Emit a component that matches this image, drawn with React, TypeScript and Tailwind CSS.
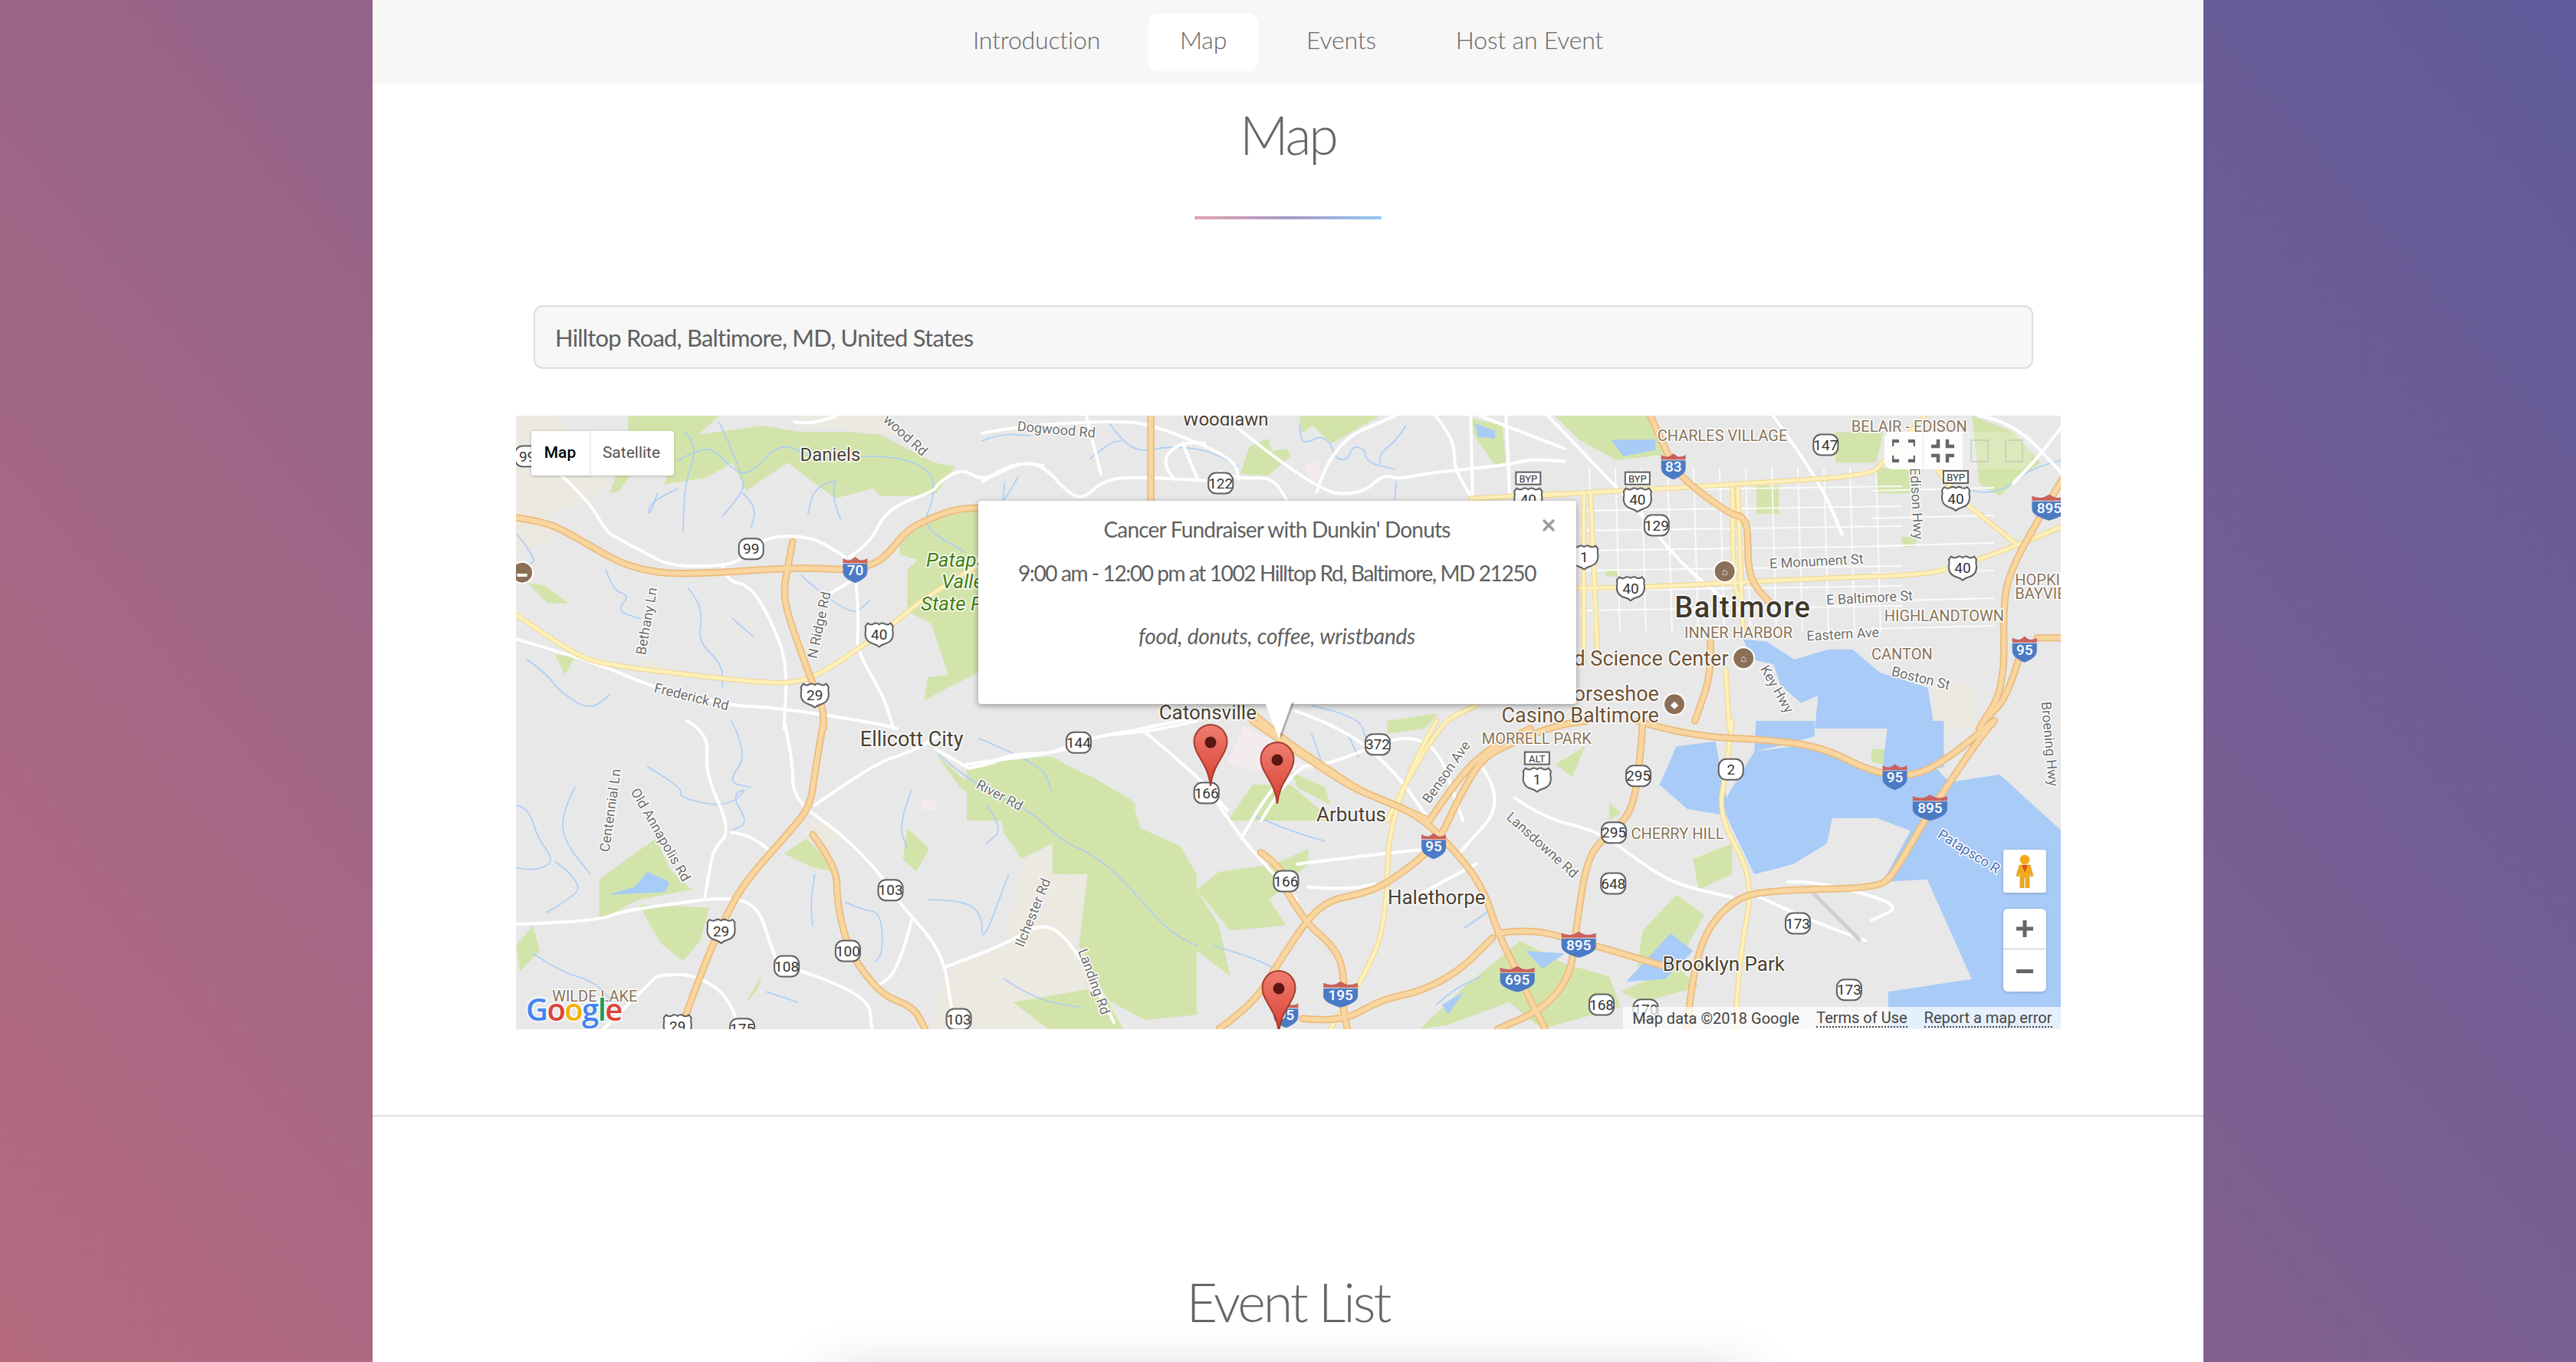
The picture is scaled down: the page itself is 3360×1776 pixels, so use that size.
import { X } from "lucide-react";

// crop origin + horizontal scale of each zoomed map region, used to place map data
const crops: Record<string, [number, number, number]> = {
  a: [660, 2.24, 530],
  b: [1260, 1.823, 630],
  c: [2000, 2.24, 530],
  d: [660, 1.742, 940],
  e: [1560, 1.375, 940],
  f: [1280, 2.063, 535],
};

const pt = (z: string, x: number, y: number): [number, number] => {
  const [ox, s, oy] = crops[z];
  return [ox + x / s, oy + y / 3];
};

const points = (z: string, s: string) =>
  s
    .trim()
    .split(/\s+/)
    .map((p) => {
      const [x, y] = p.split(",").map(Number);
      return pt(z, x, y);
    });

const polygon = (z: string, s: string) =>
  points(z, s)
    .map(([x, y], i) => `${i ? "L" : "M"}${x.toFixed(1)} ${y.toFixed(1)}`)
    .join("") + "Z";

// rounds the bends of a road through the midpoints of its segments
const curve = (z: string, s: string) => {
  const p = points(z, s);
  let d = `M${p[0][0].toFixed(1)} ${p[0][1].toFixed(1)}`;
  for (let i = 1; i < p.length - 1; i++) {
    const mx = (p[i][0] + p[i + 1][0]) / 2;
    const my = (p[i][1] + p[i + 1][1]) / 2;
    d += `Q${p[i][0].toFixed(1)} ${p[i][1].toFixed(1)} ${mx.toFixed(1)} ${my.toFixed(1)}`;
  }
  const last = p[p.length - 1];
  return d + `L${last[0].toFixed(1)} ${last[1].toFixed(1)}`;
};

type Geo = [string, string];

const beige: Geo[] = [
  ["a", "27,36 150,36 300,260 270,350 120,420 140,520 27,560"],
  ["a", "470,36 500,36 520,90 480,90"],
  ["a", "840,36 1100,36 1160,120 1000,90 860,80"],
  ["d", "960,1205 1000,970 1130,880 1170,560 1240,480 1240,610 1320,600 1290,880 1400,1180 1420,1205"],
  ["c", "1170,1080 1280,1080 1290,1260 1170,1260"],
  ["d", "690,380 760,430 720,560 680,420"],
  ["a", "400,1000 440,980 450,1030 400,1030"],
];

const green: Geo[] = [
  ["a", "355,36 620,36 560,110 750,75 860,100 1000,100 1090,110 1250,220 1310,235 1255,340 1200,350 1090,350 1070,320 960,360 820,220 700,330 660,220 580,280 460,305 480,220 350,200"],
  ["a", "320,270 360,270 330,330 300,340"],
  ["a", "1380,395 1270,430 1180,470 1145,530 1150,580 1200,600 1170,640 1170,800 1240,850 1290,1050 1230,1060 1220,1150 1290,1100 1380,1040"],
  ["a", "60,690 110,700 180,770 120,770 90,730"],
  ["a", "140,970 200,980 170,1050"],
  ["d", "975,130 1040,230 1130,150 1240,140 1270,170 1340,230 1420,310 1440,420 1530,490 1568,600 1568,1150 1450,1170 1320,1050 1150,1100 1230,1205 1400,1205 1300,880 1320,600 1240,600 1240,480 1170,540 1130,440 1120,360 1030,260"],
  ["d", "910,420 960,500 930,590 900,540"],
  ["d", "210,620 290,520 340,460 370,580 420,660 300,700 210,780"],
  ["d", "630,520 680,460 740,560 740,590 690,570"],
  ["d", "300,720 460,730 440,860 400,940 350,870"],
  ["d", "21,880 60,800 75,900 30,980"],
  ["d", "540,1110 580,990 570,1050"],
  ["b", "60,1100 200,1100 300,1150 400,1250 400,1320 0,1320 0,1120"],
  ["b", "620,1320 680,1180 770,1180 870,1320"],
  ["b", "1000,930 1120,900 1090,960 1000,980"],
  ["b", "1400,1100 1470,1030 1440,1150"],
  ["f", "695,250 720,140 770,110 780,160 820,150 830,180 770,255"],
  ["f", "855,22 1070,22 1000,80 940,130 890,60 860,90"],
  ["f", "1315,30 1400,60 1410,215 1380,215 1320,90"],
  ["c", "60,36 330,36 380,190 240,210 130,130"],
  ["c", "650,310 715,310 715,420 650,420"],
  ["c", "1000,240 1100,240 1100,340 1000,340"],
  ["c", "880,100 1020,100 1000,220 880,220"],
  ["c", "1280,36 1400,100 1480,220 1400,300 1360,350 1300,300"],
  ["c", "1070,510 1120,510 1110,550 1080,550"],
  ["c", "210,640 245,640 245,665 210,665"],
  ["e", "40,590 140,560 200,500 200,560 130,700 160,800 60,820 0,660"],
  ["e", "0,660 40,800 60,1000 0,900"],
  ["e", "800,820 860,680 910,760 860,960 790,960"],
  ["e", "480,1040 580,860 660,950 740,1000 760,1120 620,1205 560,1100 450,1190 400,1205"],
  ["e", "890,540 960,480 960,600 900,660"],
  ["e", "1210,110 1260,110 1250,180 1210,160"],
  ["e", "740,320 760,360 740,390"],
  ["e", "760,1060 860,960 900,1040 800,1100"],
  ["e", "170,200 230,260 240,330 180,260"],
];

const pinkish: Geo[] = [
  ["b", "660,950 740,1020 830,1130 780,1110 680,1130 620,1090"],
  ["f", "870,210 905,195 910,265 880,285"],
  ["d", "940,310 975,310 975,350 945,350"],
];

const water: Geo[] = [
  ["c", "610,910 680,920 760,990 860,950 930,950 1010,1040 1150,1100 1170,1260 820,1260 830,1130 780,1160 720,1090 700,1010 640,990"],
  ["e", "860,100 930,80 950,300 1000,120 1100,90 1190,190 1260,220 1320,170 1350,240 1440,210 1551,430 1551,1205 1240,1205 1240,1060 1390,1010 1310,620 1230,630 1280,430 1220,380 1140,380 1130,480 1070,560 1000,600 960,420 950,370 880,345 830,250"],
  ["e", "1003,0 1108,0 1108,60 1060,90 1000,120"],
  ["e", "1240,0 1340,0 1340,180 1260,220 1230,180"],
  ["c", "225,130 355,130 355,170 260,195"],
  ["f", "1325,50 1380,80 1380,110 1335,105"],
  ["d", "290,650 320,590 370,630 360,670 230,680"],
  ["e", "590,900 660,910 620,970"],
  ["e", "770,1020 850,830 890,900 840,1010"],
  ["e", "440,1110 480,1060 450,1150"],
];

const highways: Geo[] = [
  ["a", "27,435 100,450 160,480 250,550 330,610 400,640 480,655 620,650 780,635 900,632 985,640 1060,625 1110,585 1170,480 1260,425 1320,400 1400,395"],
  ["a", "835,530 822,620 808,730 825,830 860,960 895,1090 925,1180 925,1260"],
  ["d", "720,0 700,200 690,330 650,420 540,630 490,790 450,950 395,1205"],
  ["d", "695,445 750,570 750,700 770,860 800,960 855,1075 925,1120 950,1205"],
  ["f", "454,22 454,354"],
  ["b", "680,900 740,990 860,1120 930,1200 1020,1260 1100,1320"],
  ["e", "100,0 180,120 270,250 320,300 380,350 430,430 510,630 540,830 570,960 600,1100 625,1205"],
  ["e", "40,1205 100,1110 140,970 200,770 240,700 290,680 340,640 430,490 470,300 510,150 560,90 640,20 700,0"],
  ["e", "790,0 880,60 1040,75 1130,110 1210,200 1280,220 1340,160 1430,0"],
  ["e", "800,0 795,170 780,360 740,440 700,530 680,820 670,1000 620,1130 540,1205"],
  ["e", "540,830 590,815 660,845 840,960"],
  ["e", "880,1205 890,900 960,690 1050,660 1220,655 1250,600 1310,370 1400,80 1430,0"],
  ["e", "160,660 190,780 250,890 265,1000 260,1100 270,1205"],
  ["e", "190,1165 260,1180 330,1090 400,1060 470,980 530,850"],
  ["e", "115,515 150,570 160,640"],
  ["c", "340,36 390,190 430,280 570,420 610,430 625,480 625,670 690,770"],
  ["c", "515,920 520,1040 470,1230"],
  ["c", "1541,290 1470,450 1400,620 1370,750 1375,1100 1300,1260"],
  ["c", "1470,905 1541,905"],
  ["c", "1420,970 1385,1130 1330,1210"],
  ["b", "1100,1320 1170,1150 1240,1040 1340,960"],
];

const arterials: Geo[] = [
  ["a", "27,815 120,900 220,985 320,1015 500,1045 700,1075 850,1085 950,1020 1050,925 1130,850 1210,760 1400,600"],
  ["c", "20,350 160,335 400,320 640,300 980,270 1020,220 1140,40"],
  ["c", "145,340 145,1000"],
  ["c", "165,340 185,960"],
  ["c", "120,710 240,710 430,700 640,685 880,670 1100,660 1210,640 1400,550 1541,470"],
  ["c", "580,320 580,690 600,750"],
  ["c", "595,320 610,880"],
  ["c", "560,1030 570,1260"],
  ["c", "1180,250 1240,360 1300,420 1410,540"],
  ["e", "430,0 345,320 340,800 300,1000 240,1205"],
  ["e", "960,0 950,190 935,370 1000,620 975,900 965,1205"],
  ["b", "1000,1320 1110,950 1210,870"],
  ["f", "1315,345 1568,325"],
];

const roads: Geo[] = [
  ["a", "27,910 180,970 310,1030 430,1100 650,1170 750,1175 900,1200 1080,1240 1140,1260"],
  ["a", "160,270 240,370 290,490 330,520 400,570 480,625 620,625 690,600 750,510 890,505 990,590"],
  ["a", "1000,590 1060,540 1110,400 1250,330 1260,300 1330,240 1390,295 1480,220 1568,230"],
  ["a", "630,620 640,680 710,700 770,830 820,1000 810,1260"],
  ["a", "1020,680 1030,850 1020,950 1100,1130 1130,1260"],
  ["a", "940,735 1010,680"],
  ["a", "840,60 880,70 960,40"],
  ["d", "21,795 200,785 260,745 400,710 500,690 570,720 600,880 620,970"],
  ["d", "630,0 650,150 650,310 760,440 850,600 890,710 990,900 1010,1120 1020,1205"],
  ["d", "700,330 830,170 920,120 980,60"],
  ["d", "1050,185 1100,170 1140,130 1260,125 1340,55 1450,45 1568,0"],
  ["d", "975,110 1050,185"],
  ["d", "670,980 820,1065 830,1205"],
  ["d", "1000,960 1130,880 1220,780 1290,880 1380,1180"],
  ["d", "920,780 890,980 840,1040"],
  ["d", "340,1000 400,980 480,1040 520,1140 520,1205"],
  ["d", "220,1205 340,1000"],
  ["d", "410,0 460,50 450,200 510,430 470,500 460,590 450,690"],
  ["d", "510,435 550,445 600,510"],
  ["b", "0,1100 80,1080 200,1060 280,1000 420,960 500,930 640,890"],
  ["b", "420,970 540,1130 620,1280"],
  ["b", "700,1320 780,1100 850,1110 1100,940 1180,1320"],
  ["b", "780,890 900,960 1020,1130 1100,1320"],
  ["e", "30,300 80,460 130,580 180,700"],
  ["e", "80,460 120,300 175,180"],
  ["e", "570,300 620,380 720,430 800,560 860,640 960,690"],
  ["e", "180,560 330,520 420,500"],
  ["e", "1000,680 1100,780 1200,860"],
  ["e", "1060,630 1110,625 1270,720 1210,780"],
  ["e", "500,150 560,300 470,520"],
  ["e", "200,650 260,660 320,640"],
  ["e", "390,690 500,560"],
  ["f", "0,280 90,205 160,210 230,320 270,350 330,270 430,260 600,275"],
  ["f", "320,250 280,22"],
  ["f", "640,240 690,270 780,260 820,350"],
  ["f", "0,90 100,60 370,40 470,60 680,190 690,270"],
  ["f", "680,60 900,320 1020,330 1080,250 1120,270 1200,245 1410,215 1480,190 1568,200"],
  ["f", "900,320 940,130 1110,22"],
  ["f", "1220,22 1270,110 1270,220 1300,300 1320,350"],
  ["f", "1315,22 1320,350"],
  ["f", "1410,22 1420,340"],
  ["f", "1340,22 1568,150"],
  ["f", "540,130 580,270"],
  ["f", "600,130 540,120 490,180 500,240 520,270"],
  ["c", "40,36 200,260 300,400 430,620 600,800"],
  ["c", "700,40 830,280 900,500"],
  ["c", "1400,300 1460,220 1541,80"],
  ["c", "1300,36 1400,60 1541,260"],
];

const rivers: Geo[] = [
  ["a", "500,210 580,155 620,190 700,290 800,130 900,215 1100,185 1240,240 1250,360 1210,470 1340,570"],
  ["a", "520,100 560,150 520,300 515,490"],
  ["a", "620,60 700,290 680,350 630,430"],
  ["a", "690,340 730,390 715,470"],
  ["a", "960,290 900,310 880,420"],
  ["a", "960,290 950,350 975,440"],
  ["a", "440,340 415,440 415,380 500,320"],
  ["a", "30,500 90,600 60,620"],
  ["a", "290,640 310,720 360,740 320,800 390,830"],
  ["a", "530,710 560,760 570,830 560,920 630,1010 630,1100"],
  ["a", "660,830 720,900"],
  ["a", "860,660 1000,830 1060,760"],
  ["a", "60,990 120,1050 150,1110 240,1190 300,1130"],
  ["d", "320,180 400,260 390,300 500,340 550,260 510,290 550,400 510,430"],
  ["d", "21,330 50,340 70,460 110,550 65,585 21,575"],
  ["d", "110,550 180,640 130,710 90,750"],
  ["d", "155,260 125,360 130,470 190,600"],
  ["d", "510,0 550,130 500,240 555,260"],
  ["d", "700,600 690,700 695,800"],
  ["d", "770,710 810,740 850,750 855,900 840,940"],
  ["d", "960,700 1030,700 1080,750 1080,880 1140,600"],
  ["d", "920,270 890,400 910,500"],
  ["d", "1090,330 1130,420 1090,480"],
  ["d", "60,910 120,980 200,1020 240,1100"],
  ["d", "980,130 1060,250 1190,350 1260,470 1330,520 1400,620 1500,820 1568,880"],
  ["d", "1130,1010 1200,1090 1300,1120"],
  ["d", "590,1060 660,1100"],
  ["f", "0,120 50,90 130,100"],
  ["f", "340,45 375,120 430,165 500,140 610,155 690,220"],
  ["f", "290,190 345,125 375,120"],
  ["f", "60,350 98,260"],
  ["f", "855,50 855,120 880,125 910,100 940,130 950,190 985,195 995,140 1030,150 1035,205 1110,230"],
  ["f", "1140,60 1120,110 1070,170 1070,210"],
  ["f", "1115,280 1110,350"],
  ["b", "90,0 80,150"],
  ["b", "820,870 930,910 950,1000"],
  ["b", "820,980 850,1120"],
  ["b", "30,1000 180,1100 200,1200"],
  ["e", "30,880 110,930 160,1000"],
  ["e", "100,370 180,440 230,470"],
  ["e", "270,50 290,140"],
  ["e", "430,1110 460,1050 510,1000"],
  ["e", "480,810 520,750"],
  ["c", "1280,330 1350,350 1440,250 1541,210"],
];

const stateRoutes: [string, number, number, string][] = [
  ["a", 714, 557, "99"],
  ["a", 60, 195, "99"],
  ["f", 642, 285, "122"],
  ["b", 266, 1015, "144"],
  ["b", 570, 1212, "166"],
  ["b", 977, 1022, "372"],
  ["c", 852, 150, "147"],
  ["c", 358, 465, "129"],
  ["d", 872, 662, "103"],
  ["d", 775, 900, "100"],
  ["d", 636, 960, "108"],
  ["d", 1027, 1167, "103"],
  ["d", 535, 1205, "175"],
  ["e", 160, 627, "166"],
  ["e", 792, 215, "295"],
  ["e", 748, 437, "295"],
  ["e", 747, 636, "648"],
  ["e", 958, 190, "2"],
  ["e", 1078, 792, "173"],
  ["e", 1170, 1052, "173"],
  ["e", 726, 1110, "168"],
  ["e", 805, 1130, "170"],
];

const usRoutes: [string, number, number, string, string?][] = [
  ["a", 1088, 893, "40"],
  ["a", 900, 1130, "29"],
  ["b", 1468, 290, "1"],
  ["b", 1356, 1160, "1", "ALT"],
  ["b", 1335, 65, "40", "BYP"],
  ["c", 302, 365, "40", "BYP"],
  ["c", 282, 712, "40"],
  ["c", 1252, 632, "40"],
  ["c", 1232, 360, "40", "BYP"],
  ["d", 487, 822, "29"],
  ["d", 388, 1195, "29"],
];

const interstates: [string, number, number, string][] = [
  ["a", 1018, 640, "70"],
  ["c", 407, 235, "83"],
  ["c", 1505, 395, "895"],
  ["c", 1433, 950, "95"],
  ["e", 425, 490, "95"],
  ["e", 685, 875, "895"],
  ["e", 575, 1010, "695"],
  ["e", 258, 1070, "195"],
  ["e", 160, 1150, "95"],
  ["e", 1252, 220, "95"],
  ["e", 1315, 340, "895"],
];

// z, x, y, text, size, colour, rotation, weight, anchor
type Label = [string, number, number, string, number, string, number?, number?, string?];
const town = "#4b4030";
const hood = "#8a7357";
const road = "#6d6d6d";
const poi = "#6f5235";

const labels: Label[] = [
  ["d", 920, 72, "Ellicott City", 27, town],
  ["a", 945, 187, "Daniels", 24, town],
  ["f", 655, 35, "Woodlawn", 24, town],
  ["b", 573, 897, "Catonsville", 26, town],
  ["e", 277, 365, "Arbutus", 26, town],
  ["e", 430, 690, "Halethorpe", 26, town],
  ["e", 945, 952, "Brooklyn Park", 26, town],
  ["c", 610, 785, "Baltimore", 38, "#42392b", 0, 500],
  ["c", 550, 113, "CHARLES VILLAGE", 20, hood],
  ["c", 1096, 78, "BELAIR - EDISON", 20, hood],
  ["c", 1405, 678, "HOPKINS", 20, hood, 0, 400, "start"],
  ["c", 1405, 733, "BAYVIEW", 20, hood, 0, 400, "start"],
  ["c", 1198, 820, "HIGHLANDTOWN", 20, hood],
  ["c", 597, 885, "INNER HARBOR", 20, hood],
  ["c", 1075, 970, "CANTON", 20, hood],
  ["b", 1355, 998, "MORRELL PARK", 20, hood],
  ["e", 862, 440, "CHERRY HILL", 20, hood],
  ["c", 568, 985, "Maryland Science Center", 27, poi, 0, 400, "end"],
  ["c", 365, 1125, "Horseshoe", 27, poi, 0, 400, "end"],
  ["c", 365, 1208, "Casino Baltimore", 27, poi, 0, 400, "end"],
  ["a", 408, 840, "Bethany Ln", 18, road, -80],
  ["a", 912, 855, "N Ridge Rd", 18, road, -78],
  ["a", 540, 1135, "Frederick Rd", 18, road, 14],
  ["a", 1165, 112, "wood Rd", 18, road, 42],
  ["f", 200, 75, "Dogwood Rd", 18, road, 5],
  ["c", 825, 605, "E Monument St", 18, road, -3],
  ["c", 980, 748, "E Baltimore St", 18, road, -3],
  ["c", 902, 890, "Eastern Ave", 18, road, -3],
  ["c", 1130, 1062, "Boston St", 18, road, 14],
  ["c", 710, 1105, "Key Hwy", 18, road, 60],
  ["c", 1118, 380, "Edison Hwy", 18, road, 87],
  ["e", 1530, 90, "Broening Hwy", 18, road, 85],
  ["b", 1140, 1130, "Benson Ave", 18, road, -55],
  ["d", 1120, 290, "River Rd", 18, road, 28],
  ["d", 235, 350, "Centennial Ln", 18, road, -82],
  ["d", 350, 445, "Old Annapolis Rd", 18, road, 60],
  ["d", 1195, 750, "Ilchester Rd", 18, road, -68],
  ["d", 1335, 1020, "Landing Rd", 18, road, 70],
  ["e", 620, 485, "Lansdowne Rd", 18, road, 42],
  ["e", 1385, 510, "Patapsco R", 18, "#4a6fb5", 32],
  ["d", 200, 1077, "WILDE LAKE", 20, hood],
];

const Shape = ({ items, fill }: { items: Geo[]; fill: string }) => (
  <>
    {items.map(([z, s], i) => (
      <path key={i} d={polygon(z, s)} fill={fill} />
    ))}
  </>
);

const Lines = ({ items, color, width }: { items: Geo[]; color: string; width: number }) => (
  <>
    {items.map(([z, s], i) => (
      <path key={i} d={curve(z, s)} fill="none" stroke={color} strokeWidth={width} strokeLinejoin="round" strokeLinecap="round" />
    ))}
  </>
);

const StateShield = ({ x, y, text }: { x: number; y: number; text: string }) => (
  <g transform={`translate(${x} ${y})`}>
    <rect x={-16} y={-13.5} width={32} height={27} rx={10} fill="#fff" stroke="#5f5f5f" strokeWidth={2} />
    <text y={6.5} textAnchor="middle" fontSize={19} fill="#333">{text}</text>
  </g>
);

const UsShield = ({ x, y, text, tag }: { x: number; y: number; text: string; tag?: string }) => (
  <g transform={`translate(${x} ${y})`}>
    <path
      d="M-15 -15 Q-11 -12 -7.5 -14 Q-4 -16.5 0 -13.5 Q4 -16.5 7.5 -14 Q11 -12 15 -15 L18 -11 Q17 -7 18 -3 Q19 9 7 12 Q3 13 0 16 Q-3 13 -7 12 Q-19 9 -18 -3 Q-17 -7 -18 -11 Z"
      fill="#fff"
      stroke="#5f5f5f"
      strokeWidth={2}
      strokeLinejoin="round"
    />
    <text y={6.5} textAnchor="middle" fontSize={19} fill="#333">{text}</text>
    {tag && (
      <g transform="translate(0 -28)">
        <rect x={-16} y={-8} width={32} height={16} fill="#fff" stroke="#5f5f5f" strokeWidth={2} />
        <text y={5} textAnchor="middle" fontSize={13} fill="#333">{tag}</text>
      </g>
    )}
  </g>
);

const InterstateShield = ({ x, y, text }: { x: number; y: number; text: string }) => {
  const h = text.length > 2 ? 22.5 : 16;
  return (
    <g transform={`translate(${x} ${y})`}>
      <path d={`M${-h} -8 L${h} -8 L${h} 2 Q${h} 11 0 17 Q${-h} 11 ${-h} 2 Z`} fill="#4b7bc4" />
      <path
        d={`M${-h} -9 L${-h} -15 Q${-h / 2} -11 ${-h / 4} -14 L0 -17 L${h / 4} -14 Q${h / 2} -11 ${h} -15 L${h} -9 Z`}
        fill="#c9615d"
      />
      <text y={7} textAnchor="middle" fontSize={19} fontWeight={500} fill="#fff">{text}</text>
    </g>
  );
};

const Pin = ({ x, y }: { x: number; y: number }) => (
  <g transform={`translate(${x} ${y})`}>
    <path
      d="M0 0 C-12 0 -21.5 10 -21.5 22 C-21.5 40 -3 50 0 80 C3 50 21.5 40 21.5 22 C21.5 10 12 0 0 0 Z"
      fill="url(#pinFill)"
      stroke="#a53b2e"
      strokeWidth={2}
    />
    <circle cy={23} r={7.5} fill="#5a1610" />
  </g>
);

const Poi = ({ z, x, y, glyph }: { z: string; x: number; y: number; glyph: string }) => {
  const [px, py] = pt(z, x, y);
  return (
    <g transform={`translate(${px} ${py})`}>
      <circle r={14} fill="#8c6f57" stroke="#fff" strokeWidth={2} />
      <text y={5} textAnchor="middle" fontSize={13} fill="#fff">{glyph}</text>
    </g>
  );
};

const grid = () => {
  const lines: string[] = [];
  for (let y = 640; y <= 820; y += 26) lines.push(`M2060 ${y}L2480 ${y - 6}`);
  for (let x = 2072; x <= 2460; x += 34) lines.push(`M${x} 610L${x + 6} 825`);
  for (let y = 640; y <= 820; y += 36) lines.push(`M2440 ${y}L2600 ${y - 4}`);
  return lines.join("");
};

const MapDrawing = () => (
  <svg viewBox="672 542 2015 800" className="block h-[800px] w-[2015px] font-['Roboto',sans-serif]">
    <defs>
      <linearGradient id="pinFill" x1="0" y1="0" x2="0" y2="1">
        <stop offset="0" stopColor="#ef7d72" />
        <stop offset="1" stopColor="#d9402f" />
      </linearGradient>
    </defs>
    <rect x={672} y={542} width={2015} height={800} fill="#e8e8e8" />
    <Shape items={beige} fill="#ece9e1" />
    <Shape items={green} fill="#d3e4ab" />
    <Shape items={pinkish} fill="#f4ebee" />
    <Shape items={water} fill="#a8cbf7" />
    <Lines items={rivers} color="#a9cdf7" width={1.6} />
    <path d={grid()} stroke="#fff" strokeWidth={1.8} strokeOpacity={0.85} fill="none" />
    <Lines items={roads} color="#ffffff" width={4} />
    <path d={curve("e", "1100,660 1190,860")} stroke="#cfcfcf" strokeWidth={5} fill="none" />
    <Lines items={arterials} color="#efd99a" width={7} />
    <Lines items={arterials} color="#fdf0b8" width={4.5} />
    <Lines items={highways} color="#ebbb7e" width={9.5} />
    <Lines items={highways} color="#f9d69f" width={6} />
    <g style={{ paintOrder: "stroke" }} stroke="#ffffff" strokeWidth={3} strokeLinejoin="round">
      {labels.map(([z, x, y, text, size, color, rot, weight, anchor], i) => {
        const [px, py] = pt(z, x, y);
        return (
          <text
            key={i}
            transform={`translate(${px} ${py}) rotate(${rot ?? 0})`}
            y={size * 0.35}
            textAnchor={(anchor as "start" | "end") ?? "middle"}
            fontSize={size}
            fontWeight={weight ?? 400}
            letterSpacing={text === "Baltimore" ? 1.5 : 0}
            fill={color}
          >
            {text}
          </text>
        );
      })}
      <g fontStyle="italic" fontSize={26} fill="#3f7d10">
        <text x={1207} y={739}>Patapsco</text>
        <text x={1227} y={767}>Valley</text>
        <text x={1200} y={796}>State Park</text>
      </g>
    </g>
    {stateRoutes.map(([z, x, y, t], i) => {
      const [px, py] = pt(z, x, y);
      return <StateShield key={i} x={px} y={py} text={t} />;
    })}
    {usRoutes.map(([z, x, y, t, tag], i) => {
      const [px, py] = pt(z, x, y);
      return <UsShield key={i} x={px} y={py} text={t} tag={tag} />;
    })}
    {interstates.map(([z, x, y, t], i) => {
      const [px, py] = pt(z, x, y);
      return <InterstateShield key={i} x={px} y={py} text={t} />;
    })}
    <Poi z="c" x={557} y={645} glyph="⌂" />
    <Poi z="c" x={612} y={985} glyph="⌂" />
    <Poi z="c" x={410} y={1165} glyph="◆" />
    <Poi z="a" x={45} y={650} glyph="▬" />
    <Pin x={1578} y={945} />
    <Pin x={1665} y={968} />
    <Pin x={1667} y={1266} />
    <g
      fontSize={40}
      fontWeight={600}
      style={{ paintOrder: "stroke" }}
      stroke="#ffffff"
      strokeOpacity={0.7}
      strokeWidth={4}
      fontFamily="'Open Sans',sans-serif"
    >
      <text x={685} y={1331} letterSpacing={-1.6}>
        <tspan fill="#4285f4">G</tspan>
        <tspan fill="#db4437">o</tspan>
        <tspan fill="#f4b400">o</tspan>
        <tspan fill="#4285f4">g</tspan>
        <tspan fill="#0f9d58">l</tspan>
        <tspan fill="#db4437">e</tspan>
      </text>
    </g>
  </svg>
);

const CornerIcon = ({ inward }: { inward?: boolean }) => (
  <svg viewBox="0 0 30 30" className="h-[30px] w-[30px]" fill="none" stroke="#666" strokeWidth={4.5}>
    {inward ? (
      <path d="M9 0V9H0M21 0V9H30M9 30V21H0M21 30V21H30" />
    ) : (
      <path d="M0 9V2H9M21 2H30V9M0 21V28H9M21 28H30V21" />
    )}
  </svg>
);

const MapControls = () => (
  <>
    <div className="absolute left-5 top-5 flex h-[58px] rounded-[3px] bg-white font-['Roboto',sans-serif] text-[21px] shadow-[0_1px_4px_rgba(0,0,0,0.2)]">
      <div className="flex w-[76px] items-center justify-center font-medium text-black shadow-[1px_0_3px_rgba(0,0,0,0.12)]">Map</div>
      <div className="flex w-[110px] items-center justify-center text-[#565656]">Satellite</div>
    </div>

    <div className="absolute left-[1785px] top-[21px] flex h-[49px]">
      <div className="flex w-[50px] items-center justify-center rounded-l-[10px] bg-white/90">
        <CornerIcon />
      </div>
      <div className="ml-[1px] flex w-[51px] items-center justify-center bg-white/90">
        <CornerIcon inward />
      </div>
      <div className="flex w-[45px] items-center justify-center bg-white/20">
        <div className="h-[30px] w-[24px] border-2 border-[#bbbbbb]/50" />
      </div>
      <div className="flex w-[45px] items-center justify-center rounded-r-[10px] bg-white/20">
        <div className="h-[30px] w-[24px] border-2 border-[#bbbbbb]/50" />
      </div>
    </div>

    <div className="absolute left-[1940px] top-[566px] flex h-[56px] w-[56px] items-center justify-center rounded-[3px] bg-white shadow-[0_1px_4px_rgba(0,0,0,0.2)]">
      <svg viewBox="0 0 24 44" className="h-[44px] w-[24px]">
        <circle cx={12} cy={7} r={6.5} fill="#f2ab1c" />
        <path d="M5 14H19L23 28 20 29 18 22V44H13V30H11V44H6V22L4 29 1 28Z" fill="#f2ab1c" stroke="#c98a10" strokeWidth={0.6} />
        <path d="M8 14 12 24 16 14Z" fill="#d9531e" />
      </svg>
    </div>

    <div className="absolute left-[1940px] top-[643px] flex w-[56px] flex-col rounded-[6px] bg-white shadow-[0_1px_4px_rgba(0,0,0,0.2)]">
      <div className="flex h-[54px] items-center justify-center border-b-[3px] border-[#e6e6e6]">
        <svg viewBox="0 0 22 22" className="h-[22px] w-[22px]">
          <path d="M8.5 0H13.5V8.5H22V13.5H13.5V22H8.5V13.5H0V8.5H8.5Z" fill="#666" />
        </svg>
      </div>
      <div className="flex h-[54px] items-center justify-center">
        <div className="h-[5px] w-[22px] bg-[#666]" />
      </div>
    </div>

    <div className="absolute bottom-0 right-0 flex h-[29px] items-center gap-[22px] bg-white/70 pl-[12px] pr-[11px] font-['Roboto',sans-serif] text-[20px] text-[#444]">
      <span>Map data ©2018 Google</span>
      <span className="border-b-2 border-dotted border-[#444] leading-[22px]">Terms of Use</span>
      <span className="border-b-2 border-dotted border-[#444] leading-[22px]">Report a map error</span>
    </div>
  </>
);

const InfoWindow = () => (
  <div className="absolute left-[603px] top-[111px] h-[265px] w-[780px] rounded-[4px] bg-white text-[28px] text-[#5f5f5f] shadow-[0_2px_7px_1px_rgba(0,0,0,0.3)]">
    <X className="absolute right-[24px] top-[20px] h-[24px] w-[24px] text-[#9b9b9b]" strokeWidth={3.4} />
    <div className="pt-[19px] text-center leading-[36px] tracking-[-0.8px]">Cancer Fundraiser with Dunkin' Donuts</div>
    <div className="mt-[21px] text-center leading-[36px] tracking-[-1.4px]">9:00 am - 12:00 pm at 1002 Hilltop Rd, Baltimore, MD 21250</div>
    <div className="mt-[46px] text-center italic leading-[36px] tracking-[-0.25px]">food, donuts, coffee, wristbands</div>
    <svg viewBox="0 0 44 46" className="absolute left-[369px] top-[265px] h-[46px] w-[44px] overflow-visible">
      <polygon points="5,-2 40,-2 23,45" fill="#000" opacity={0.25} transform="translate(3 0)" />
      <polygon points="5,-2 40,-2 23,45" fill="#fff" />
    </svg>
  </div>
);

export default function App() {
  const tabs = ["Introduction", "Map", "Events", "Host an Event"];

  return (
    <div className="flex h-[1776px] items-start justify-center overflow-hidden bg-[linear-gradient(50deg,#b56a7f_0%,#5f5a9a_100%)] font-['Lato',sans-serif] text-[#666]">
      <div className="flex w-[2388px] flex-col items-center bg-white">
        <nav className="flex h-[110px] w-full items-center justify-center gap-[22px] bg-[#f7f7f7]">
          {tabs.map((tab) => (
            <a
              key={tab}
              className={`flex h-[76px] items-center rounded-[14px] px-[41px] pb-[6px] text-[32px] font-light tracking-[-0.2px] ${
                tab === "Map" ? "bg-white" : ""
              }`}
            >
              {tab}
            </a>
          ))}
        </nav>

        <h1 className="mt-[20px] text-[70px] font-light leading-[90px] tracking-[-3px]">Map</h1>
        <div className="mt-[62px] h-[4px] w-[244px] rounded-[1px] bg-[linear-gradient(90deg,#e3a3ae,#a79ac8,#93c6f0)]" />

        <input
          readOnly
          value="Hilltop Road, Baltimore, MD, United States"
          className="mr-[12px] mt-[112px] h-[83px] w-[1956px] rounded-[12px] border-2 border-[#dddddd] bg-[#f7f7f7] px-[26px] text-[31px] tracking-[-0.8px] text-[#5f5f5f] outline-none"
        />

        <div className="relative mt-[61px] h-[800px] w-[2015px]">
          <div className="h-[800px] overflow-hidden">
            <MapDrawing />
          </div>
          <MapControls />
          <InfoWindow />
        </div>

        <hr className="mt-[112px] h-[2px] w-full border-0 bg-[#dddddd]" />

        <h2 className="mt-[196px] text-[70px] font-light leading-[90px] tracking-[-3px]">Event List</h2>
        <div className="mt-[52px] h-[300px] w-[1197px] shrink-0 bg-white shadow-[0_0_70px_rgba(0,0,0,0.2)]" />
      </div>
    </div>
  );
}
